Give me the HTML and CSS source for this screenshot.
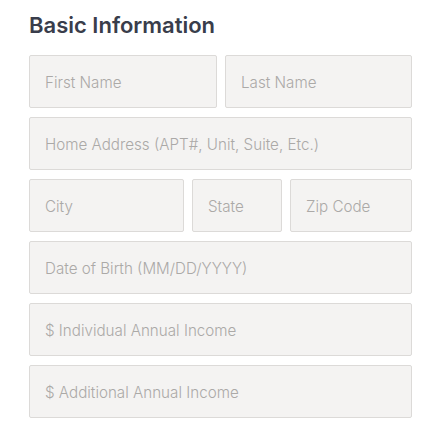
FILE: index.html
```html
<!doctype html>
<html lang="en">
<head>
    <meta charset="UTF-8">
    <title>Basic Information</title>
    <link rel="stylesheet" href="styles.css">
</head>
<body>
    <form class="info-form">
        <h2>Basic Information</h2>
        <div class="row row-name">
            <input type="text" placeholder="First Name">
            <input type="text" placeholder="Last Name">
        </div>
        <div class="row">
            <input type="text" placeholder="Home Address (APT#, Unit, Suite, Etc.)">
        </div>
        <div class="row row-city">
            <input type="text" placeholder="City">
            <input type="text" placeholder="State">
            <input type="text" placeholder="Zip Code">
        </div>
        <div class="row">
            <input type="text" placeholder="Date of Birth (MM/DD/YYYY)">
        </div>
        <div class="row">
            <input type="text" placeholder="$ Individual Annual Income">
        </div>
        <div class="row">
            <input type="text" placeholder="$ Additional Annual Income">
        </div>
    </form>
</body>
</html>
```

FILE: styles.css
```css
body {
    margin: 0;
    background: #fff;
    font-family: Inter, "Noto Sans", sans-serif;
}

.info-form {
    width: 383px;
    padding: 12px 0 0 29px;
    display: flex;
    flex-direction: column;
    gap: 9px;
}

h2 {
    margin: 0 0 7px;
    font-size: 22px;
    font-weight: 600;
    line-height: 27px;
    color: #393d4b;
}

.row {
    display: grid;
    grid-template-columns: 1fr;
    gap: 8px;
}

.row-name {
    grid-template-columns: 188px 1fr;
}

.row-city {
    grid-template-columns: 155px 90px 1fr;
}

input {
    box-sizing: border-box;
    width: 100%;
    height: 53px;
    margin: 0;
    padding: 2px 15px 0;
    border: 1px solid #dcdad8;
    border-radius: 2px;
    background: #f4f3f2;
    font-family: Inter, "Noto Sans", sans-serif;
    font-size: 15.2px;
    font-weight: 300;
    color: #555;
}

input::placeholder {
    color: #aba9a7;
}
```
